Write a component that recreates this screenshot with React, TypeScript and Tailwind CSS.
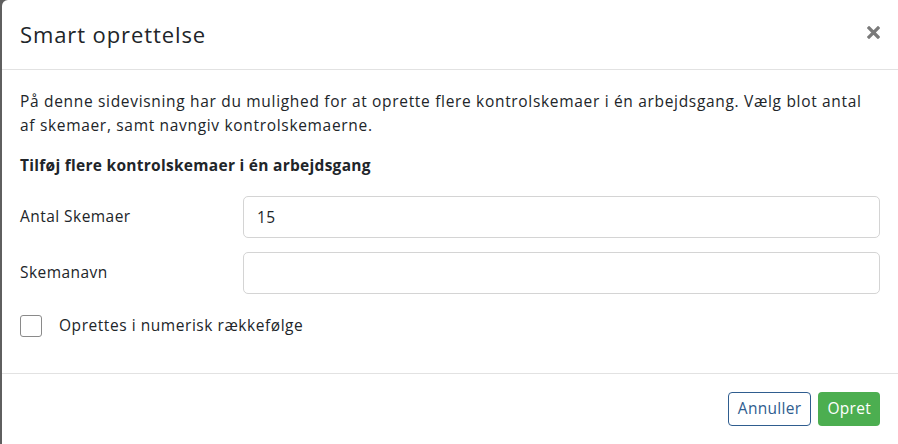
import { useState } from "react"

export default function App() {
  const [count, setCount] = useState("15")
  const [name, setName] = useState("")
  const [numeric, setNumeric] = useState(false)

  return (
    <div className="h-[444px] w-[898px] overflow-hidden bg-[#5f5f5f] pl-[2px] font-['Open_Sans',sans-serif] text-[#212529]">
      <div className="flex h-full flex-col rounded-tl-[6px] bg-white">
        <div className="flex h-[70px] items-center justify-between border-b border-[#e2e2e2] pl-[18px] pr-[18px]">
          <h1 className="text-[22px] font-normal tracking-[0.9px]">Smart oprettelse</h1>
          <button className="mb-[4px] text-[#7a7a7a]" aria-label="Luk">
            <svg width="13" height="13" viewBox="0 0 13 13">
              <path d="M2 2L11 11M11 2L2 11" stroke="currentColor" strokeWidth="3.2" strokeLinecap="square" />
            </svg>
          </button>
        </div>

        <div className="flex flex-col px-[18px] pt-[19px] text-[15.5px] tracking-[0.45px]">
          <p className="leading-[24px] tracking-[0.68px]">
            På denne sidevisning har du mulighed for at oprette flere kontrolskemaer i én arbejdsgang. Vælg blot antal af skemaer, samt navngiv kontrolskemaerne.
          </p>
          <h2 className="mt-[16px] font-bold leading-[24px] tracking-[0.28px]">Tilføj flere kontrolskemaer i én arbejdsgang</h2>

          <div className="mt-[19px] grid grid-cols-[223px_1fr] items-center gap-y-[14px]">
            <label htmlFor="count">Antal Skemaer</label>
            <input
              id="count"
              value={count}
              onChange={(e) => setCount(e.target.value)}
              className="h-[42px] rounded-[5px] border border-[#d4d4d4] px-[13px] outline-none"
            />
            <label htmlFor="name">Skemanavn</label>
            <input
              id="name"
              value={name}
              onChange={(e) => setName(e.target.value)}
              className="h-[42px] rounded-[5px] border border-[#d4d4d4] px-[13px] outline-none"
            />
          </div>

          <label className="mt-[20px] flex items-center gap-[17px] tracking-[0.55px]">
            <input
              type="checkbox"
              checked={numeric}
              onChange={(e) => setNumeric(e.target.checked)}
              className="h-[22px] w-[22px] appearance-none rounded-[3px] border border-[#8a8a8a] bg-white"
            />
            Oprettes i numerisk rækkefølge
          </label>
        </div>

        <div className="mt-auto flex h-[71px] items-center justify-end gap-[7px] border-t border-[#e2e2e2] px-[18px] text-[15.5px] tracking-[0.3px]">
          <button className="h-[34px] rounded-[4px] border border-[#2f5d8f] px-[9px] text-[#2f5d8f]">Annuller</button>
          <button className="h-[34px] rounded-[4px] bg-[#4cae50] px-[9px] text-white">Opret</button>
        </div>
      </div>
    </div>
  )
}
